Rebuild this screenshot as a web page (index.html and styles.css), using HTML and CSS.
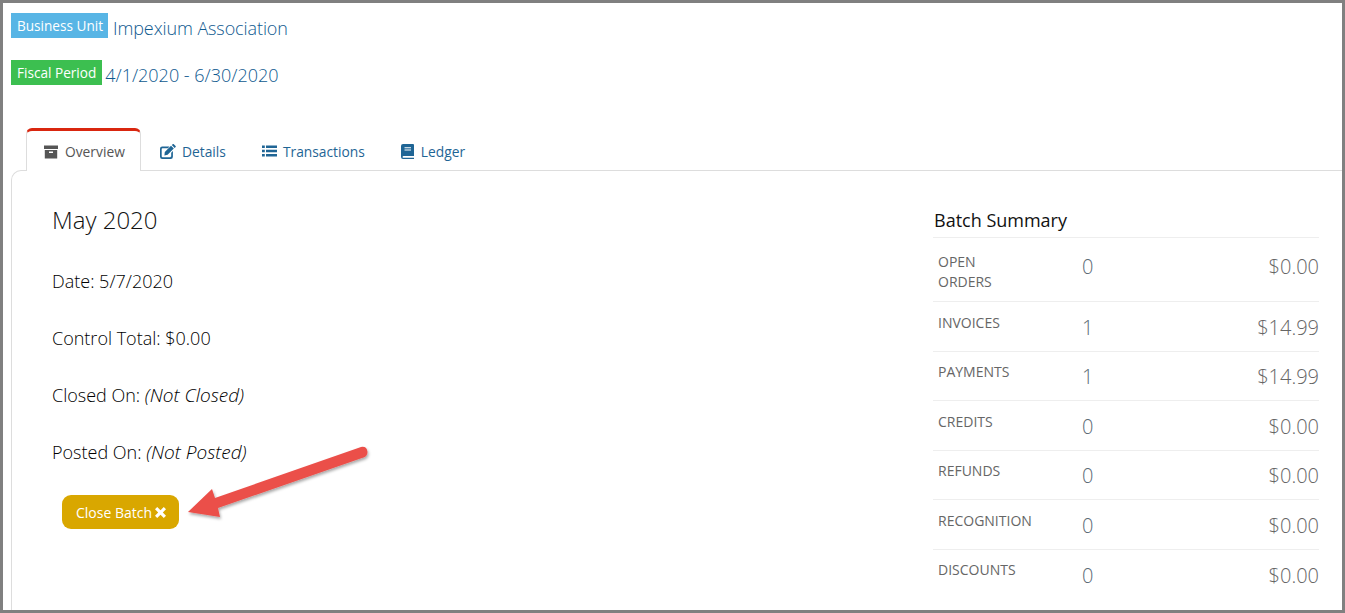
FILE: index.html
```html
<!DOCTYPE html>
<html lang="en">
<head>
<meta charset="utf-8">
<title>Batch</title>
<link rel="stylesheet" href="styles.css">
</head>
<body>
<div class="frame">
  <div class="meta">
    <div class="meta-row meta-bu"><span class="tag tag-blue">Business Unit</span><a class="meta-value">Impexium Association</a></div>
    <div class="meta-row meta-fp"><span class="tag tag-green">Fiscal Period</span><a class="meta-value">4/1/2020 - 6/30/2020</a></div>
  </div>
  <nav class="tabs">
    <a class="tab active">
      <svg class="ico" viewBox="0 0 14 14"><path d="M0 .5h14v3.500H0z"/><path d="M.8 5h12.400v8.500H.8zM5 6.600v1.400h4V6.600z" fill-rule="evenodd"/></svg>Overview</a>
    <a class="tab">
      <svg class="ico ico-edit" viewBox="0 0 16 15"><path d="M2.200 2.500H9.500L7.800 4.200H2.600a.9.9 0 0 0-.9.9v7.200c0 .5.400.9.900.9h7.700c.5 0 .9-.4.900-.9V8.700l1.700-1.700v5.800a2.200 2.200 0 0 1-2.200 2.200H2.200A2.200 2.200 0 0 1 0 12.800V4.700A2.200 2.200 0 0 1 2.200 2.500z"/><path d="M4.800 8 11 1.800 13.800 4.600 7.600 10.800 4.400 11.400zM11.800 1 12.700.2c.3-.3.800-.3 1.100 0l1.800 1.800c.3.3.3.800 0 1.100l-.9.900z"/></svg>Details</a>
    <a class="tab tab-list">
      <svg class="ico ico-list" viewBox="0 0 15 14"><path d="M0 1.500h2.800v2.600H0zM4 1.500h11v2.600H4zM0 5.700h2.800v2.600H0zM4 5.700h11v2.600H4zM0 9.900h2.800v2.600H0zM4 9.900h11v2.600H4z"/></svg>Transactions</a>
    <a class="tab">
      <svg class="ico ico-book" viewBox="0 0 13 15"><path fill-rule="evenodd" d="M2 0h10a1 1 0 0 1 1 1v11H2.500a.9.900 0 0 0 0 1.800H13V15H2a2 2 0 0 1-2-2V2a2 2 0 0 1 2-2zM3.500 3.200v1.100h6.500V3.200zm0 2.300v1.100h6.500V5.500z"/></svg>Ledger</a>
  </nav>
  <main class="panel">
    <section class="info">
      <h1 class="title">May 2020</h1>
      <p class="line">Date: 5/7/2020</p>
      <p class="line">Control Total: $0.00</p>
      <p class="line">Closed On: <em>(Not Closed)</em></p>
      <p class="line">Posted On: <em>(Not Posted)</em></p>
      <button class="close-btn">Close Batch <svg class="x" viewBox="0 0 11 11"><path d="M2.200 0 5.500 3.200 8.800 0 11 2.200 7.800 5.500 11 8.800 8.800 11 5.500 7.800 2.200 11 0 8.800 3.200 5.500 0 2.200z"/></svg></button>
    </section>
    <aside class="summary">
      <h2 class="summary-title">Batch Summary</h2>
      <div class="row row-tall"><span class="label">OPEN<br>ORDERS</span><span class="count">0</span><span class="amount">$0.00</span></div>
      <div class="row"><span class="label">INVOICES</span><span class="count">1</span><span class="amount">$14.99</span></div>
      <div class="row"><span class="label">PAYMENTS</span><span class="count">1</span><span class="amount">$14.99</span></div>
      <div class="row"><span class="label">CREDITS</span><span class="count">0</span><span class="amount">$0.00</span></div>
      <div class="row"><span class="label">REFUNDS</span><span class="count">0</span><span class="amount">$0.00</span></div>
      <div class="row"><span class="label">RECOGNITION</span><span class="count">0</span><span class="amount">$0.00</span></div>
      <div class="row"><span class="label">DISCOUNTS</span><span class="count">0</span><span class="amount">$0.00</span></div>
    </aside>
  </main>
  <svg class="arrow" viewBox="180 440 200 90" width="200" height="90">
    <defs><filter id="sh" x="-20%" y="-40%" width="140%" height="180%"><feDropShadow dx="1" dy="2" stdDeviation="1.500" flood-color="#000" flood-opacity=".35"/></filter></defs>
    <path filter="url(#sh)" fill="#eb4f4a" d="M188 512 212 489 215 498 361 447Q367 446 367.500 452 367.500 457 362 458L218 508 220 517z"/>
  </svg>
</div>
</body>
</html>
```
FILE: styles.css
```css
* { box-sizing: border-box; }
html, body { margin: 0; padding: 0; }
body { font-family: "Open Sans", sans-serif; background: #fff; }
.frame {
  position: relative;
  width: 1345px;
  height: 613px;
  border: 3px solid #808080;
  padding: 10px 0 0 8px;
  overflow: hidden;
  background: #fff;
}
.meta-row { display: flex; align-items: flex-start; }
.meta-bu { height: 47px; }
.meta-fp { height: 68px; }
.tag {
  display: block;
  height: 25px;
  padding: 0 5px 0 6px;
  font-size: 13.600px;
  line-height: 25px;
  color: #fff;
  white-space: nowrap;
}
.tag-blue { background: #58b5e5; }
.tag-green { background: #3cbf50; padding-right: 6px; }
.meta-value { font-size: 18px; font-weight: 300; line-height: 30px; color: #0f5a8f; }
.meta-bu .meta-value { margin-left: 5px; letter-spacing: -0.1px; }
.meta-fp .meta-value { margin-left: 3px; }
.tabs { display: flex; margin-left: 15px; height: 42px; position: relative; z-index: 1; }
.tab {
  display: flex;
  align-items: center;
  height: 43px;
  padding: 3px 17px 0 19px;
  font-size: 13.800px;
  color: #1f6595;
  white-space: nowrap;
}
.tab.active {
  width: 115px;
  padding: 1px 0 0 17px;
  color: #555;
  background: #fff;
  border: 1px solid #ddd;
  border-top: 3px solid #d9260f;
  border-bottom: 0;
  border-radius: 6px 6px 0 0;
}
.ico { width: 14px; height: 14px; margin-right: 7px; fill: currentColor; flex: none; }
.ico-edit { width: 16px; height: 15px; margin-right: 6px; }
.ico-list { width: 15px; margin-right: 6px; }
.ico-book { width: 13px; height: 15px; }
.panel {
  display: flex;
  justify-content: space-between;
  height: 460px;
  border: 1px solid #ddd;
  border-right: 0;
  border-bottom: 0;
  border-radius: 10px 0 0 0;
  padding: 0 23px 0 40px;
}
.info { width: 500px; }
.title { margin: 30px 0 0; font-size: 24px; font-weight: 300; line-height: 38px; color: #111; }
.line { margin: 0; height: 57px; font-size: 18px; font-weight: 300; line-height: 24px; color: #000; }
.title + .line { margin-top: 30px; }
em { font-size: 19px; font-style: italic; font-weight: 300; }
.close-btn {
  display: flex;
  align-items: center;
  width: 117px;
  height: 34px;
  margin: -2px 0 0 10px;
  padding: 0 0 0 14px;
  border: 0;
  border-radius: 9px;
  background: #d9a700;
  color: #fff;
  font-family: inherit;
  font-size: 14px;
  white-space: pre;
}
.x { width: 11px; height: 11px; fill: #fff; margin: 1px 0 0 -1px; }
.summary { width: 386px; margin-top: 35px; }
.summary-title { margin: 0; height: 31px; padding-left: 1px; font-size: 18px; font-weight: 400; line-height: 28px; color: #111; }
.row {
  display: flex;
  height: 49px;
  border-top: 1px solid #eee;
}
.row:nth-child(odd) { height: 50px; }
.row-tall { height: 64px; }
.label { width: 149px; padding: 10px 0 0 5px; font-size: 14px; line-height: 20px; color: #666; }
.count { width: 60px; padding-top: 11px; font-size: 20px; font-weight: 300; line-height: 27px; color: #5d6b75; }
.amount { flex: 1; padding-top: 11px; text-align: right; font-size: 20px; font-weight: 300; line-height: 27px; color: #666; }
.row:nth-child(odd) .label { padding-top: 11px; }
.row:nth-child(odd) .count, .row:nth-child(odd) .amount, .row:last-child .count, .row:last-child .amount { padding-top: 12px; }
.row-tall .label { padding-top: 14px; }
.row-tall .count, .row-tall .amount { padding-top: 15px; }
.arrow { position: absolute; left: 177px; top: 437px; overflow: visible; }
```
